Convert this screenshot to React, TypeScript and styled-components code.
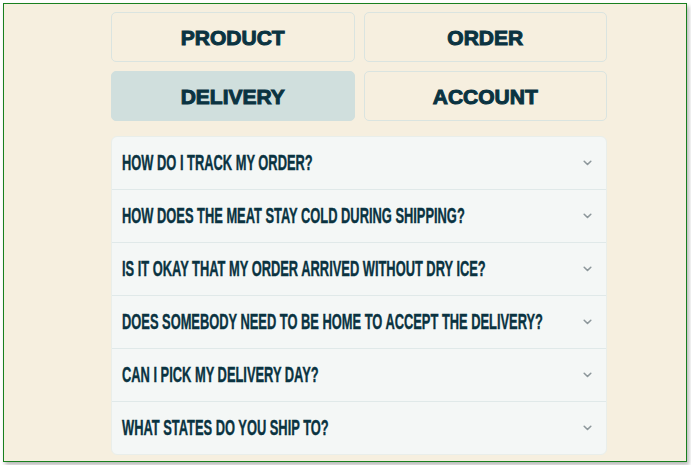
import styled, { createGlobalStyle } from 'styled-components'
import { useState } from 'react'

const categories = ['Product', 'Order', 'Delivery', 'Account']

const questions = [
  'How do I track my order?',
  'How does the meat stay cold during shipping?',
  'Is it okay that my order arrived without dry ice?',
  'Does somebody need to be home to accept the delivery?',
  'Can I pick my delivery day?',
  'What states do you ship to?',
]

export default function App() {
  const [active, setActive] = useState('Delivery')
  const [open, setOpen] = useState<number | null>(null)

  return (
    <>
      <GlobalStyle />
      <Page>
        <Frame>
          <Column>
            <Tabs>
              {categories.map(cat => (
                <Tab
                  key={cat}
                  $active={active === cat}
                  onClick={() => setActive(cat)}
                >
                  {cat}
                </Tab>
              ))}
            </Tabs>

            <Accordion>
              {questions.map((q, i) => (
                <Row key={q} onClick={() => setOpen(open === i ? null : i)}>
                  <Question>{q}</Question>
                  <Chevron
                    width="9"
                    height="6"
                    viewBox="0 0 9 6"
                    $open={open === i}
                  >
                    <path
                      d="M1.2 1.3 L4.5 4.5 L7.8 1.3"
                      fill="none"
                      stroke="currentColor"
                      strokeWidth="1.6"
                      strokeLinecap="round"
                      strokeLinejoin="round"
                    />
                  </Chevron>
                </Row>
              ))}
            </Accordion>
          </Column>
        </Frame>
      </Page>
    </>
  )
}

const GlobalStyle = createGlobalStyle`
  html, body {
    margin: 0;
    padding: 0;
    background: #ffffff;
  }
  * {
    box-sizing: border-box;
  }
`

const Page = styled.div`
  padding: 3px;
  width: 691px;
  height: 465px;
`

const Frame = styled.div`
  width: 684px;
  height: 459px;
  border: 1px solid #19801f;
  background: #f6efdf;
  box-shadow: 2px 3px 4px rgba(0, 0, 0, 0.28);
  padding: 8px 0 0 107px;
`

const Column = styled.div`
  width: 496px;
  display: flex;
  flex-direction: column;
  gap: 15px;
`

const Tabs = styled.div`
  display: grid;
  grid-template-columns: 1fr 1fr;
  gap: 9px;
`

const Tab = styled.button<{ $active: boolean }>`
  height: 50px;
  border-radius: 5px;
  border: 1.5px solid ${props => props.$active ? '#d0dfdd' : '#dae4e0'};
  background: ${props => props.$active ? '#d0dfdd' : '#f6efdf'};
  color: #0a3341;
  font-family: 'Liberation Sans', Arial, sans-serif;
  font-weight: 700;
  font-size: 21px;
  text-transform: uppercase;
  -webkit-text-stroke: 1px #0a3341;
  letter-spacing: 0;
  cursor: pointer;
  display: flex;
  align-items: center;
  justify-content: center;
  padding: 2px 0 0;
`

const Accordion = styled.div`
  background: #f4f7f6;
  border: 1px solid #e9eeea;
  border-radius: 6px;
  overflow: hidden;
`

const Row = styled.div`
  height: 52px;
  display: flex;
  align-items: center;
  gap: 8px;
  padding: 0 14px 0 10px;
  cursor: pointer;

  & + & {
    height: 53px;
    border-top: 1px solid #e0e9e9;
  }
`

const Question = styled.span`
  flex: 1;
  min-width: 0;
  font-family: 'Liberation Sans', Arial, sans-serif;
  font-weight: 700;
  font-size: 22px;
  line-height: 1;
  color: #0a3341;
  -webkit-text-stroke: 0.4px #0a3341;
  text-transform: uppercase;
  white-space: nowrap;
  transform: scaleX(0.585);
  transform-origin: left center;
`

const Chevron = styled.svg<{ $open: boolean }>`
  color: #8d979b;
  flex-shrink: 0;
  transform: rotate(${props => props.$open ? 180 : 0}deg);
  transition: transform 0.2s ease-in-out;
`
